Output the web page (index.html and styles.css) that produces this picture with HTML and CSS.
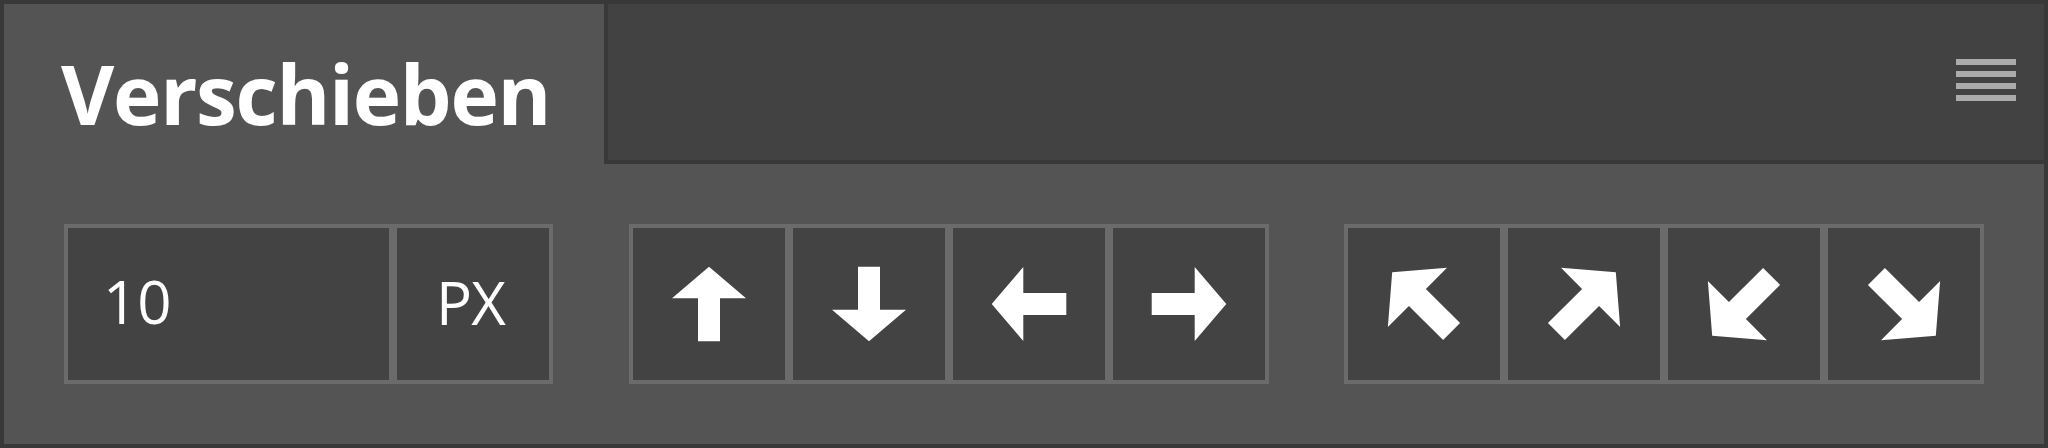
FILE: index.html
```html
<!DOCTYPE html>
<html lang="de">
<head>
<meta charset="utf-8">
<title>Verschieben</title>
<link rel="stylesheet" href="styles.css">
</head>
<body>
<div class="window">
  <div class="header">
    <div class="tab"><span class="title">Verschieben</span></div>
    <div class="header-fill">
      <div class="menu" aria-label="Menü">
        <span class="menu-bar"></span>
        <span class="menu-bar"></span>
        <span class="menu-bar"></span>
        <span class="menu-bar"></span>
      </div>
    </div>
  </div>
  <div class="body">
    <div class="group">
      <div class="cell cell-input"><span class="value">10</span></div>
      <div class="cell cell-unit"><span class="unit">PX</span></div>
    </div>
    <div class="group">
      <div class="cell cell-btn">
        <svg class="arrow" viewBox="4 4 152 152" width="152" height="152"><path d="M80 42.7 L117 74.3 L91 74.3 L91 117.3 L69 117.3 L69 74.3 L43 74.3 Z"/></svg>
      </div>
      <div class="cell cell-btn">
        <svg class="arrow" viewBox="4 4 152 152" width="152" height="152"><path transform="rotate(180 80 80)" d="M80 42.7 L117 74.3 L91 74.3 L91 117.3 L69 117.3 L69 74.3 L43 74.3 Z"/></svg>
      </div>
      <div class="cell cell-btn">
        <svg class="arrow" viewBox="4 4 152 152" width="152" height="152"><path transform="rotate(-90 80 80)" d="M80 42.7 L117 74.3 L91 74.3 L91 117.3 L69 117.3 L69 74.3 L43 74.3 Z"/></svg>
      </div>
      <div class="cell cell-btn">
        <svg class="arrow" viewBox="4 4 152 152" width="152" height="152"><path transform="rotate(90 80 80)" d="M80 42.7 L117 74.3 L91 74.3 L91 117.3 L69 117.3 L69 74.3 L43 74.3 Z"/></svg>
      </div>
    </div>
    <div class="group">
      <div class="cell cell-btn">
        <svg class="arrow" viewBox="4 4 152 152" width="152" height="152"><path transform="rotate(-45 80 80)" d="M80 35 L121.8 70.7 L92 70.7 L92 119 L68 119 L68 70.7 L38.2 70.7 Z"/></svg>
      </div>
      <div class="cell cell-btn">
        <svg class="arrow" viewBox="4 4 152 152" width="152" height="152"><path transform="rotate(45 80 80)" d="M80 35 L121.8 70.7 L92 70.7 L92 119 L68 119 L68 70.7 L38.2 70.7 Z"/></svg>
      </div>
      <div class="cell cell-btn">
        <svg class="arrow" viewBox="4 4 152 152" width="152" height="152"><path transform="rotate(-135 80 80)" d="M80 35 L121.8 70.7 L92 70.7 L92 119 L68 119 L68 70.7 L38.2 70.7 Z"/></svg>
      </div>
      <div class="cell cell-btn">
        <svg class="arrow" viewBox="4 4 152 152" width="152" height="152"><path transform="rotate(135 80 80)" d="M80 35 L121.8 70.7 L92 70.7 L92 119 L68 119 L68 70.7 L38.2 70.7 Z"/></svg>
      </div>
    </div>
  </div>
</div>
</body>
</html>
```

FILE: styles.css
```css
html, body {
  margin: 0;
  padding: 0;
  background: #383838;
}

.window {
  box-sizing: border-box;
  width: 2048px;
  height: 448px;
  border: 4px solid #383838;
  background: #545454;
  display: flex;
  flex-direction: column;
  font-family: "Open Sans", "Noto Sans", sans-serif;
  color: #ffffff;
}

.header {
  display: flex;
  height: 160px;
  flex: none;
}

.tab {
  box-sizing: border-box;
  width: 600px;
  flex: none;
  padding: 48px 0 0 57px;
}

.title {
  display: block;
  font-size: 82px;
  line-height: 82px;
  font-weight: 700;
  letter-spacing: -1.3px;
}

.header-fill {
  flex: 1;
  background: #424242;
  border-left: 4px solid #383838;
  border-bottom: 4px solid #383838;
  display: flex;
  justify-content: flex-end;
  align-items: flex-start;
  padding: 55px 28px 0 0;
}

.menu {
  display: flex;
  flex-direction: column;
  gap: 6px;
  width: 60px;
}

.menu-bar {
  display: block;
  height: 6px;
  background: #ababab;
}

.body {
  flex: 1;
  box-sizing: border-box;
  padding: 60px;
  display: flex;
  justify-content: space-between;
}

.group {
  display: flex;
}

.cell {
  box-sizing: border-box;
  width: 160px;
  height: 160px;
  border: 4px solid #6b6b6b;
  background: #434343;
  display: flex;
  align-items: center;
}

.cell-input {
  width: 329px;
  padding: 0 0 6px 35px;
}

.cell-unit {
  justify-content: center;
  padding: 0 5px 4px 0;
}

.value,
.unit {
  font-size: 60px;
  line-height: 60px;
  font-weight: 400;
}

.unit {
  letter-spacing: -1px;
}

.cell-btn {
  justify-content: center;
}

.arrow {
  display: block;
  fill: #ffffff;
}
```
